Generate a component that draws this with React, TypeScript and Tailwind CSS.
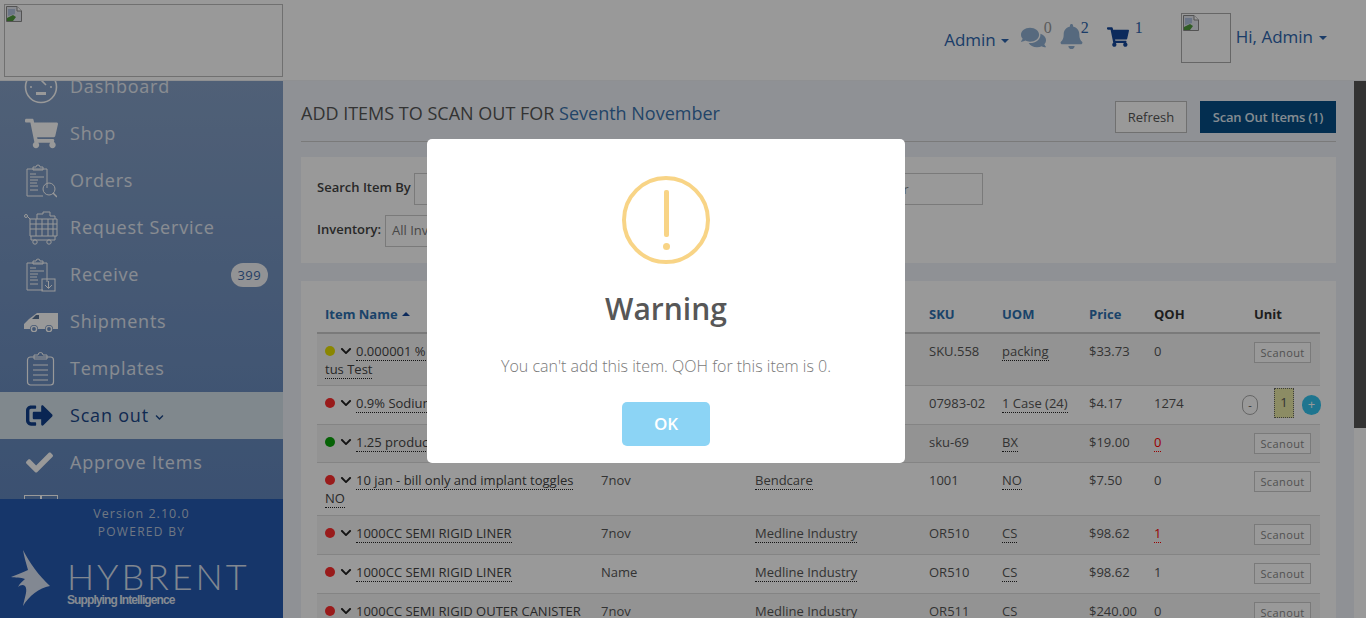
import { FaBell, FaCheck, FaChevronDown, FaComments, FaShoppingCart, FaSignOutAlt } from "react-icons/fa";

const font = { fontFamily: '"Open Sans", sans-serif' };

function BrokenImage() {
  return (
    <svg width="16" height="16" viewBox="0 0 16 16" className="block">
      <path d="M0.5 0.5H11L15.5 5V15.5H0.5Z" fill="#e4e8f0" stroke="#8a8a8a" />
      <path d="M11 0.5V5H15.5" fill="#fff" stroke="#8a8a8a" />
      <path d="M2 3H9V8L2 10Z" fill="#b3c3e0" />
      <path d="M1 15V12L7 9L10 11L7 15Z" fill="#4f9a3c" />
    </svg>
  );
}

function Gauge() {
  return (
    <svg width="34" height="34" viewBox="0 0 34 34" fill="none" stroke="#fff" strokeWidth="1.6">
      <circle cx="17" cy="17" r="15.5" />
      <path d="M17 10l5 5M6 17h2M26 17h2M9 9l1.5 1.5M25 9l-1.5 1.5M17 5v2" />
      <path d="M12 22h10v3H12z" fill="#fff" stroke="none" />
    </svg>
  );
}

function Clipboard({ kind }: { kind: "search" | "down" | "plain" }) {
  return (
    <svg width="32" height="34" viewBox="0 0 32 34" fill="none" stroke="#fff" strokeWidth="1">
      {kind === "plain" ? (
        <rect x="2.5" y="5" width="26" height="28" rx="3" strokeWidth="1.2" />
      ) : (
        <path d="M22 24V5H2v27h16" />
      )}
      <path d={kind === "plain" ? "M9 7V3h4a2.5 2.5 0 0 1 5 0h4v4z" : "M8 6V3h3a2 2 0 0 1 4 0h3v3z"} fill="none" />
      {kind === "plain" ? (
        <path d="M8 13h15M8 18h15M8 23h15M8 28h15" />
      ) : (
        <path d="M5 10h6M5 13h14M5 16h8M5 19h7M5 22h8M5 26h8" />
      )}
      {kind === "search" && (
        <>
          <circle cx="24" cy="25" r="6" fill="none" />
          <path d="M28 29l4 4" strokeWidth="1.4" />
        </>
      )}
      {kind === "down" && (
        <>
          <rect x="17" y="21" width="13" height="12" fill="none" />
          <path d="M23.5 23v7M20 27l3.5 3.5L27 27" />
        </>
      )}
    </svg>
  );
}

function ServiceCart() {
  return (
    <svg width="34" height="34" viewBox="0 0 34 34" fill="none" stroke="#fff" strokeWidth="1">
      <circle cx="2" cy="5" r="1.5" />
      <path d="M3 5l3 3v17h27V8H6M6 13h27M6 18h27M12 8v17M18 8v17M24 8v17M29 8v17M7 25v4h24v-4" />
      <path d="M13 8V3h6V1h7v4h5v3" />
      <circle cx="11" cy="31" r="2.2" />
      <circle cx="25" cy="31" r="2.2" />
    </svg>
  );
}

function Van() {
  return (
    <svg width="34" height="20" viewBox="0 0 34 20">
      <path d="M13 1H34V17H29a4 4 0 0 0-8 0H14a4 4 0 0 0-8 0H0V12L5 7Z" fill="#fff" />
      <path d="M8 7L12 3H15V7Z" fill="#5d7596" />
      <circle cx="10" cy="17" r="2.6" fill="none" stroke="#fff" strokeWidth="1.4" />
      <circle cx="25" cy="17" r="2.6" fill="none" stroke="#fff" strokeWidth="1.4" />
    </svg>
  );
}

function Bird() {
  return (
    <svg width="40" height="58" viewBox="0 0 40 58" className="shrink-0">
      <path d="M12 0C18 12 28 26 39 36C28 38 18 46 12 56C14 46 17 40 14 36C12 34 9 35 7 37C9 33 12 31 14 29C10 27 4 28 0 27C6 25 12 22 17 20C15 13 13 6 12 0Z" fill="#d9e3f4" />
    </svg>
  );
}

const navItems = [
  { label: "Dashboard", icon: <Gauge /> },
  { label: "Shop", icon: <FaShoppingCart size={33} color="#fff" /> },
  { label: "Orders", icon: <Clipboard kind="search" /> },
  { label: "Request Service", icon: <ServiceCart /> },
  { label: "Receive", icon: <Clipboard kind="down" />, badge: "399" },
  { label: "Shipments", icon: <Van /> },
  { label: "Templates", icon: <Clipboard kind="plain" /> },
  { label: "Scan out", icon: <FaSignOutAlt size={27} color="#0f3f8a" className="mr-[4px]" />, active: true },
  { label: "Approve Items", icon: <FaCheck size={27} color="#fff" className="mr-[3px]" /> },
  {
    label: "Reports",
    icon: (
      <svg width="34" height="30" viewBox="0 0 34 30" fill="none" stroke="#fff">
        <rect x="0.5" y="0.5" width="16" height="29" />
        <rect x="17.5" y="0.5" width="16" height="29" />
      </svg>
    ),
  },
];

type Row = {
  dot: string;
  name: string[];
  col2: string;
  col3: string;
  sku: string;
  uom: string;
  price: string;
  qoh: string;
  qohRed?: boolean;
  qty?: boolean;
  h: string;
};

const rows: Row[] = [
  { dot: "bg-[#e6e000]", name: ["0.000001 % Catalog Item Sta", "tus Test"], col2: "7nov", col3: "Medline Industry", sku: "SKU.558", uom: "packing", price: "$33.73", qoh: "0", h: "h-[52px]" },
  { dot: "bg-[#ff2d2d]", name: ["0.9% Sodium Chloride Injection"], col2: "7nov", col3: "Medline Industry", sku: "07983-02", uom: "1 Case (24)", price: "$4.17", qoh: "1274", qty: true, h: "h-[39px]" },
  { dot: "bg-[#0aa30a]", name: ["1.25 product item"], col2: "7nov", col3: "Bendcare", sku: "sku-69", uom: "BX", price: "$19.00", qoh: "0", qohRed: true, h: "h-[38px]" },
  { dot: "bg-[#ff2d2d]", name: ["10 jan - bill only and implant toggles", "NO"], col2: "7nov", col3: "Bendcare", sku: "1001", uom: "NO", price: "$7.50", qoh: "0", h: "h-[53px]" },
  { dot: "bg-[#ff2d2d]", name: ["1000CC SEMI RIGID LINER"], col2: "7nov", col3: "Medline Industry", sku: "OR510", uom: "CS", price: "$98.62", qoh: "1", qohRed: true, h: "h-[39px]" },
  { dot: "bg-[#ff2d2d]", name: ["1000CC SEMI RIGID LINER"], col2: "Name", col3: "Medline Industry", sku: "OR510", uom: "CS", price: "$98.62", qoh: "1", h: "h-[39px]" },
  { dot: "bg-[#ff2d2d]", name: ["1000CC SEMI RIGID OUTER CANISTER"], col2: "7nov", col3: "Medline Industry", sku: "OR511", uom: "CS", price: "$240.00", qoh: "0", h: "h-[39px]" },
];

const dotted = "border-b border-dotted border-[#222]";

export default function App() {
  return (
    <div className="relative flex h-[618px] w-[1366px] flex-col overflow-hidden bg-white text-[#555]" style={font}>
      {/* top bar */}
      <header className="flex h-[81px] shrink-0 items-start border-b border-[#eef0f3] bg-white">
        <div className="mt-[4px] ml-[4px] h-[73px] w-[279px] border border-[#bbb] p-[1px]">
          <BrokenImage />
        </div>
        <div className="ml-auto flex items-start pr-[39px] text-[#2d65ad]">
          <div className="mt-[29px] flex items-center text-[17px] leading-[22px]">
            Admin
            <span className="mt-[2px] ml-[5px] border-x-[4px] border-t-[4px] border-x-transparent border-t-[#2d65ad]" />
          </div>
          <div className="relative mt-[25px] ml-[12px] w-[38px]">
            <FaComments size={25} color="#8fb0d2" />
            <span className="absolute top-[-9px] left-[23px] text-[16px] text-[#999]" style={{ fontFamily: '"Liberation Serif", serif' }}>0</span>
          </div>
          <div className="relative mt-[24px] w-[48px]">
            <FaBell size={25} color="#8fb0d2" />
            <span className="absolute top-[-8px] left-[22px] text-[16px] text-[#2d65ad]" style={{ fontFamily: '"Liberation Serif", serif' }}>2</span>
          </div>
          <div className="relative mt-[26px] w-[74px]">
            <FaShoppingCart size={22} color="#14479a" />
            <span className="absolute top-[-10px] left-[28px] text-[16px] text-[#2d65ad]" style={{ fontFamily: '"Liberation Serif", serif' }}>1</span>
          </div>
          <div className="mt-[13px] h-[50px] w-[50px] border border-[#aaa] p-[1px]">
            <BrokenImage />
          </div>
          <div className="mt-[25px] ml-[5px] flex items-center text-[17px] leading-[24px]">
            Hi, Admin
            <span className="mt-[1px] ml-[6px] border-x-[4px] border-t-[4px] border-x-transparent border-t-[#2d65ad]" />
          </div>
        </div>
      </header>

      <div className="flex min-h-0 flex-1">
        {/* sidebar */}
        <aside className="flex w-[283px] shrink-0 flex-col">
          <nav className="min-h-0 flex-1 overflow-hidden bg-linear-to-b from-[#85a0c6] to-[#6387bd]">
            <ul className="mt-[-18px] tracking-[0.8px] text-white/80">
              {navItems.map((item) => (
                <li
                  key={item.label}
                  className={`flex h-[47px] items-center pr-[15px] text-[18px] ${item.active ? "bg-[#d5e3eb] text-[#1a4688]" : ""}`}
                >
                  <span className="flex w-[70px] shrink-0 justify-center pl-[12px]">{item.icon}</span>
                  {item.label}
                  {item.active && <FaChevronDown size={9} className="ml-[6px] mt-[3px]" />}
                  {item.badge && (
                    <span className="ml-auto rounded-[12px] bg-[#f4f5f8] px-[7px] py-[1px] text-[13px] leading-[22px] tracking-[0.4px] text-[#3e6aa8]">
                      {item.badge}
                    </span>
                  )}
                </li>
              ))}
            </ul>
          </nav>
          <div className="h-[119px] shrink-0 bg-[#265ab1] pt-[6px] text-center text-[12.5px] leading-[18px] tracking-[1px] text-[#b9c6da]">
            <div>Version 2.10.0</div>
            <div className="text-[12px] tracking-[1.3px]">POWERED BY</div>
            <div className="mt-[9px] flex items-start pl-[11px] text-left">
              <Bird />
              <div className="ml-[16px] text-white">
                <div className="mt-[10px] text-[36px] leading-[33px] font-light tracking-[2.9px] text-[#d8e1f0]" style={{ fontFamily: "Lato, sans-serif" }}>
                  HYBRENT
                </div>
                <div className="text-[12px] leading-[14px] font-bold tracking-[-0.9px] text-[#dfe6f2]" style={{ fontFamily: '"Liberation Sans", sans-serif' }}>
                  Supplying Intelligence
                </div>
              </div>
            </div>
          </div>
        </aside>

        {/* main content */}
        <main className="min-w-0 flex-1 overflow-hidden bg-[#eef2f8] px-[18px]">
          <div className="mt-[20px] flex h-[41px] items-start border-b border-[#ccc]">
            <h1 className="mt-[-1px] text-[18px] leading-[26px] text-[#555]">
              ADD ITEMS TO SCAN OUT FOR <span className="text-[#3a72ad]">Seventh November</span>
            </h1>
            <button className="ml-auto h-[32px] w-[72px] border border-[#bbb] bg-white pt-[2px] text-[13px] text-[#555]">Refresh</button>
            <button className="ml-[13px] h-[32px] w-[136px] bg-[#054e85] pt-[2px] text-[13px] font-semibold tracking-[-0.2px] text-[#dfe8f2]">
              Scan Out Items (1)
            </button>
          </div>

          <section className="mt-[15px] bg-white p-[16px] text-[13px]">
            <div className="flex items-center">
              <span className="mt-[-2px] w-[97px] font-semibold text-[#444]">Search Item By</span>
              <input readOnly className="h-[32px] w-[365px] border border-[#ccc] bg-white" />
              <input readOnly placeholder="Search by Vendor" className="ml-[10px] h-[32px] w-[194px] border border-[#ccc] bg-white px-[12px] placeholder:text-[#888]" />
            </div>
            <div className="mt-[10px] flex items-center">
              <span className="mt-[-2px] w-[68px] font-semibold text-[#444]">Inventory:</span>
              <div className="flex h-[32px] w-[260px] items-center border border-[#ccc] px-[6px] text-[#777]">All Inventory</div>
            </div>
          </section>

          <section className="mt-[18px] h-[400px] bg-white px-[16px] pt-[24px]">
            <table className="w-[1003px] table-fixed border-collapse text-left text-[13px]">
              <colgroup>
                <col className="w-[276px]" />
                <col className="w-[154px]" />
                <col className="w-[174px]" />
                <col className="w-[73px]" />
                <col className="w-[87px]" />
                <col className="w-[65px]" />
                <col className="w-[80px]" />
                <col className="w-[94px]" />
              </colgroup>
              <thead>
                <tr className="h-[28px] border-b-2 border-[#ccc] align-top text-[13px] font-bold">
                  <th className="pl-[8px] text-[#2d70b0]">
                    Item Name
                    <span className="mb-[3px] ml-[4px] inline-block border-x-[4px] border-b-[4px] border-x-transparent border-b-[#14479a]" />
                  </th>
                  <th />
                  <th />
                  <th className="pl-[8px] text-[#2d70b0]">SKU</th>
                  <th className="pl-[8px] text-[#2d70b0]">UOM</th>
                  <th className="pl-[8px] text-[#2d70b0]">Price</th>
                  <th className="pl-[8px] text-[#333]">QOH</th>
                  <th className="pl-[28px] text-[#333]">Unit</th>
                </tr>
              </thead>
              <tbody>
                {rows.map((row, i) => (
                  <tr key={i} className={`${row.h} border-b border-[#ddd] align-top ${i % 2 === 0 ? "bg-[#f5f5f5]" : "bg-white"}`}>
                    <td className="pt-[8px] pl-[8px] leading-[18px] text-[#444]">
                      <span className={`mr-[5px] inline-block h-[10px] w-[10px] rounded-full ${row.dot}`} />
                      <FaChevronDown size={12} color="#222" className="mr-[4px] inline-block align-[-1px]" />
                      {row.name.map((line, n) => (
                        <span key={n}>
                          {n > 0 && <br />}
                          <span className={dotted}>{line}</span>
                        </span>
                      ))}
                    </td>
                    <td className="pt-[8px] pl-[8px] leading-[18px]">{row.col2}</td>
                    <td className="pt-[8px] pl-[8px] leading-[18px]">
                      <span className={dotted}>{row.col3}</span>
                    </td>
                    <td className="pt-[8px] pl-[8px] leading-[18px]">{row.sku}</td>
                    <td className="pt-[8px] pl-[8px] leading-[18px]">
                      <span className={dotted}>{row.uom}</span>
                    </td>
                    <td className="pt-[8px] pl-[8px] leading-[18px]">{row.price}</td>
                    <td className="pt-[8px] pl-[8px] leading-[18px]">
                      {row.qohRed ? <span className="border-b border-dotted border-[#f00] text-[#f00]">{row.qoh}</span> : row.qoh}
                    </td>
                    <td className="pl-[8px]">
                      {row.qty ? (
                        <div className="mt-[2px] ml-[8px] flex w-[80px] items-center text-[13px]">
                          <span className="mt-[4px] flex h-[20px] w-[16px] items-center justify-center rounded-full border border-[#aaa] text-[11px] leading-none">-</span>
                          <span className="ml-[16px] flex h-[30px] w-[20px] items-center justify-center border border-dotted border-[#666] bg-[#e9e9a7]">1</span>
                          <span className="mt-[4px] ml-[8px] flex h-[20px] w-[19px] shrink-0 items-center justify-center rounded-full bg-[#33c4ee] text-[13px] leading-none text-white">+</span>
                        </div>
                      ) : (
                        <button className="mt-[8px] ml-[20px] h-[21px] w-[57px] border border-[#ccc] bg-white text-[11px] leading-none tracking-[0.4px] text-[#888]">
                          Scanout
                        </button>
                      )}
                    </td>
                  </tr>
                ))}
              </tbody>
            </table>
          </section>
        </main>

        {/* page scrollbar */}
        <div className="w-[12px] shrink-0 bg-[#fff]">
          <div className="h-[347px] bg-[#555]" />
        </div>
      </div>

      {/* modal backdrop */}
      <div className="absolute inset-0 bg-black/40" />

      {/* warning dialog */}
      <div className="absolute top-[139px] left-[427px] flex h-[324px] w-[478px] flex-col items-center rounded-[5px] bg-white pt-[37px]">
        <div className="relative h-[88px] w-[88px] rounded-full border-[4px] border-[#f8d486]">
          <span className="absolute top-[10px] left-[38px] h-[47px] w-[5px] rounded-[2px] bg-[#f8d486]" />
          <span className="absolute top-[63px] left-[37px] h-[7px] w-[7px] rounded-full bg-[#f8d486]" />
        </div>
        <h2 className="mt-[25px] text-[30px] leading-[40px] font-semibold text-[#575757]">Warning</h2>
        <p className="mt-[26px] text-[16px] leading-[22px] font-light text-[#797979]">You can't add this item. QOH for this item is 0.</p>
        <button className="mt-[25px] h-[44px] w-[88px] rounded-[5px] bg-[#8cd4f5] text-[17px] font-semibold text-white">OK</button>
      </div>
    </div>
  );
}
